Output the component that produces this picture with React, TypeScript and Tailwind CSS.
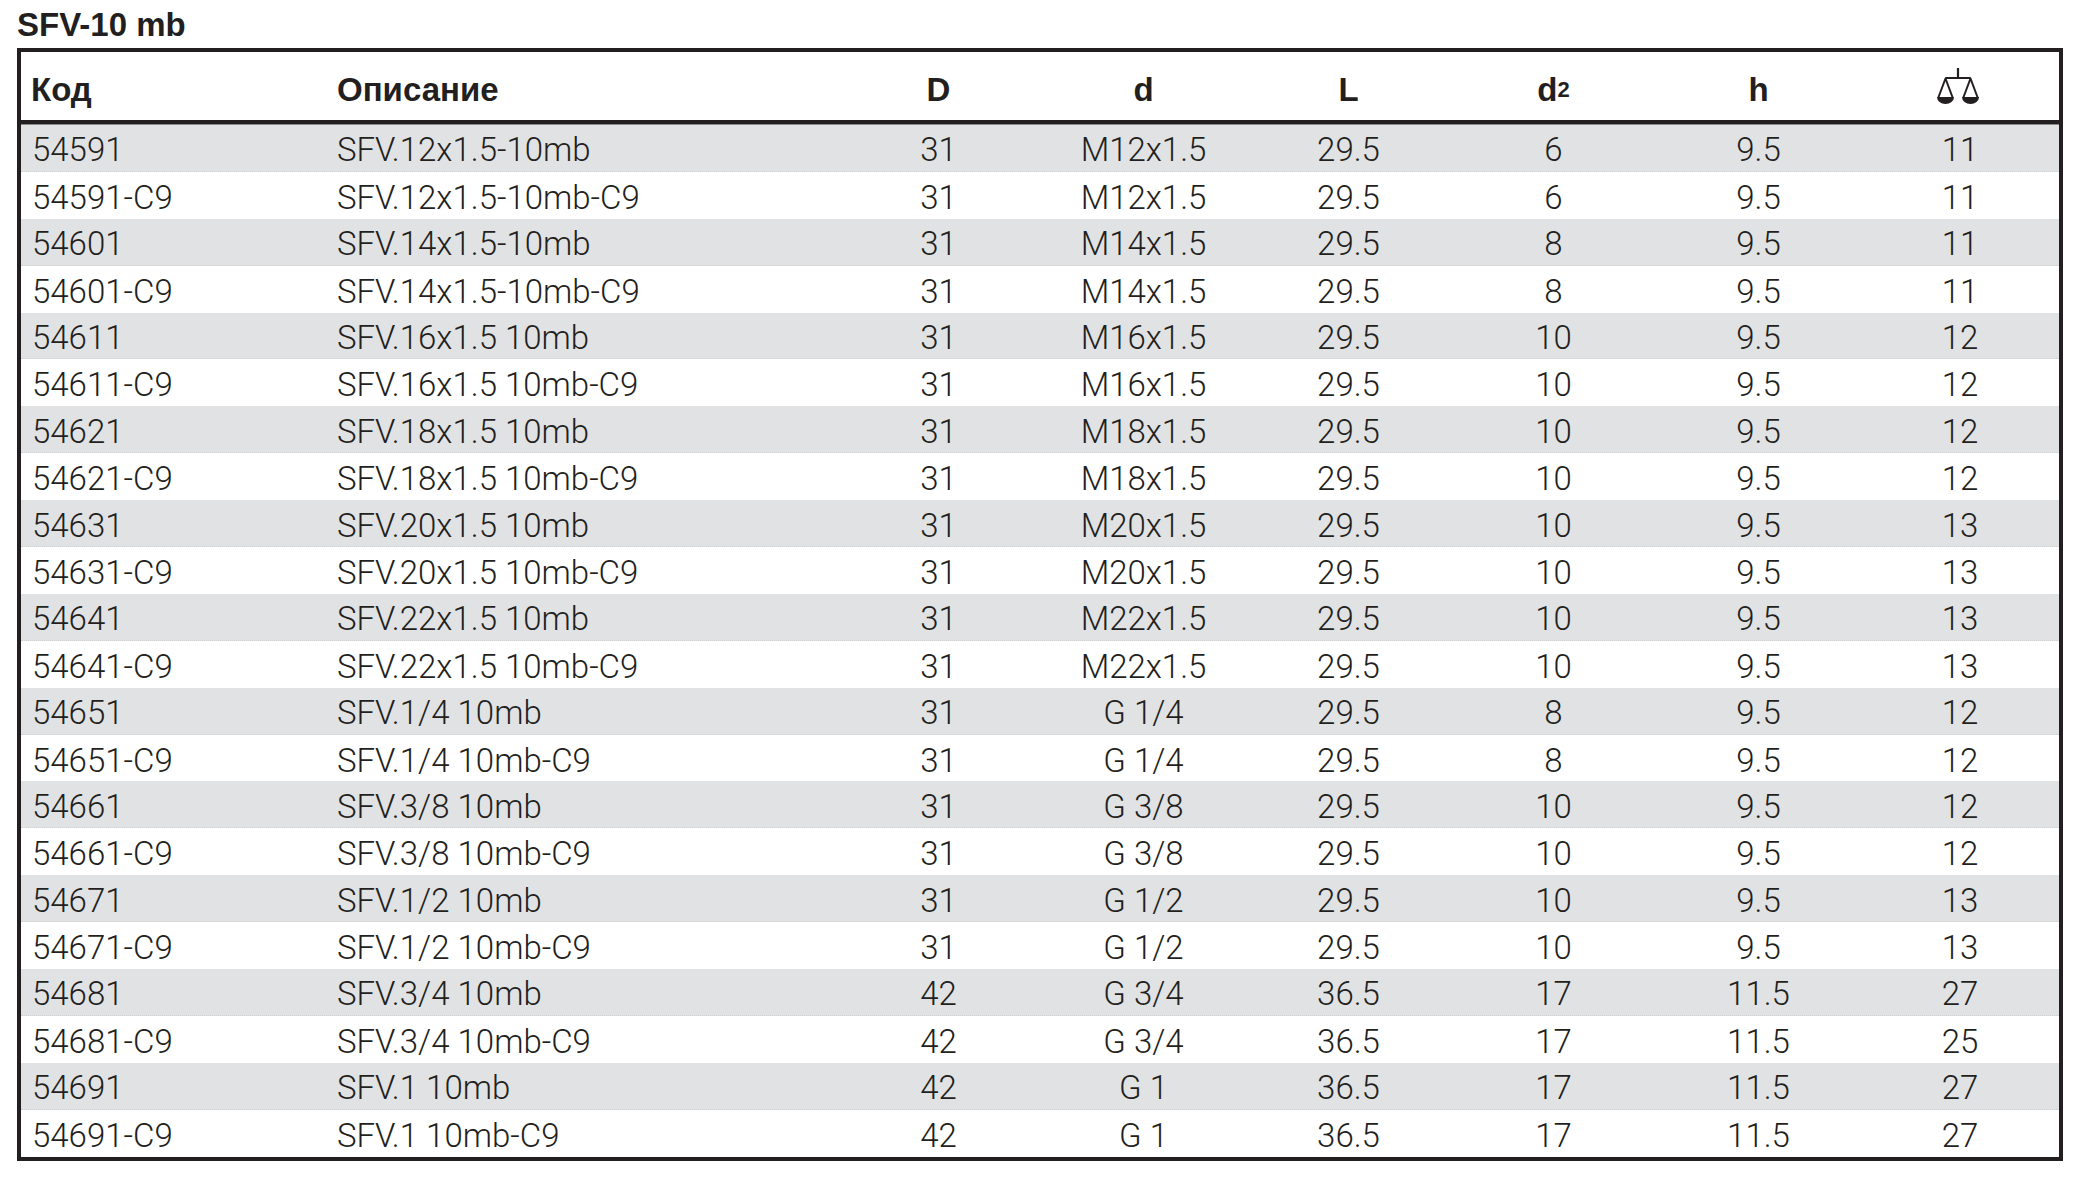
import React from "react";

type Row = [string, string, string, string, string, string, string, string];

const rows: Row[] = [
  ["54591", "SFV.12x1.5-10mb", "31", "M12x1.5", "29.5", "6", "9.5", "11"],
  ["54591-C9", "SFV.12x1.5-10mb-C9", "31", "M12x1.5", "29.5", "6", "9.5", "11"],
  ["54601", "SFV.14x1.5-10mb", "31", "M14x1.5", "29.5", "8", "9.5", "11"],
  ["54601-C9", "SFV.14x1.5-10mb-C9", "31", "M14x1.5", "29.5", "8", "9.5", "11"],
  ["54611", "SFV.16x1.5 10mb", "31", "M16x1.5", "29.5", "10", "9.5", "12"],
  ["54611-C9", "SFV.16x1.5 10mb-C9", "31", "M16x1.5", "29.5", "10", "9.5", "12"],
  ["54621", "SFV.18x1.5 10mb", "31", "M18x1.5", "29.5", "10", "9.5", "12"],
  ["54621-C9", "SFV.18x1.5 10mb-C9", "31", "M18x1.5", "29.5", "10", "9.5", "12"],
  ["54631", "SFV.20x1.5 10mb", "31", "M20x1.5", "29.5", "10", "9.5", "13"],
  ["54631-C9", "SFV.20x1.5 10mb-C9", "31", "M20x1.5", "29.5", "10", "9.5", "13"],
  ["54641", "SFV.22x1.5 10mb", "31", "M22x1.5", "29.5", "10", "9.5", "13"],
  ["54641-C9", "SFV.22x1.5 10mb-C9", "31", "M22x1.5", "29.5", "10", "9.5", "13"],
  ["54651", "SFV.1/4 10mb", "31", "G 1/4", "29.5", "8", "9.5", "12"],
  ["54651-C9", "SFV.1/4 10mb-C9", "31", "G 1/4", "29.5", "8", "9.5", "12"],
  ["54661", "SFV.3/8 10mb", "31", "G 3/8", "29.5", "10", "9.5", "12"],
  ["54661-C9", "SFV.3/8 10mb-C9", "31", "G 3/8", "29.5", "10", "9.5", "12"],
  ["54671", "SFV.1/2 10mb", "31", "G 1/2", "29.5", "10", "9.5", "13"],
  ["54671-C9", "SFV.1/2 10mb-C9", "31", "G 1/2", "29.5", "10", "9.5", "13"],
  ["54681", "SFV.3/4 10mb", "42", "G 3/4", "36.5", "17", "11.5", "27"],
  ["54681-C9", "SFV.3/4 10mb-C9", "42", "G 3/4", "36.5", "17", "11.5", "25"],
  ["54691", "SFV.1 10mb", "42", "G 1", "36.5", "17", "11.5", "27"],
  ["54691-C9", "SFV.1 10mb-C9", "42", "G 1", "36.5", "17", "11.5", "27"],
];

function Scales() {
  return (
    <svg width="42" height="37" viewBox="0 0 42 37" fill="none">
      <line x1="21" y1="0" x2="21" y2="10.5" stroke="#231f20" strokeWidth="2.2" />
      <line x1="8.5" y1="10" x2="33.5" y2="10" stroke="#231f20" strokeWidth="2" />
      <polyline points="1.2,30 8.5,10.5 15.8,30" stroke="#231f20" strokeWidth="2" strokeLinejoin="round" />
      <polyline points="26.2,30 33.5,10.5 40.8,30" stroke="#231f20" strokeWidth="2" strokeLinejoin="round" />
      <path d="M0 29 H17 A8.5 7 0 0 1 0 29 Z" fill="#231f20" />
      <path d="M25 29 H42 A8.5 7 0 0 1 25 29 Z" fill="#231f20" />
    </svg>
  );
}

const gridCols = "grid grid-cols-[304px_511px_205px_205px_205px_205px_205px_1fr]";

export default function App() {
  return (
    <div className="w-[2082px] h-[1182px] bg-white text-[#231f20] pt-[9px] pl-[17px]">
      <div
        className="text-[33px] leading-[32px] font-bold"
        style={{ fontFamily: '"Liberation Sans", Arial, sans-serif' }}
      >
        SFV-10 mb
      </div>
      <div className="mt-[7px] w-[2046px] border-4 border-[#231f20]">
        <div
          className={`${gridCols} h-[68px] text-[33px] leading-[32px] font-bold`}
          style={{ fontFamily: '"Liberation Sans", Arial, sans-serif' }}
        >
          <div className="flex items-center pl-[10px] pt-[7px]">Код</div>
          <div className="flex items-center pl-[12px] pt-[7px]">Описание</div>
          <div className="flex items-center justify-center pt-[7px]">D</div>
          <div className="flex items-center justify-center pt-[7px]">d</div>
          <div className="flex items-center justify-center pt-[7px]">L</div>
          <div className="flex items-center justify-center pt-[7px]">
            <span>d</span>
            <span className="text-[22px]">2</span>
          </div>
          <div className="flex items-center justify-center pt-[7px]">h</div>
          <div className="flex items-center justify-center pr-[4px]">
            <Scales />
          </div>
        </div>
        <div className="h-[4px] bg-[#231f20]" />
        <div className="h-px bg-[#8a8a8a]" />
        <div
          className="font-light text-[33px] leading-[33px]"
          style={{ fontFamily: 'Roboto, "Liberation Sans", sans-serif' }}
        >
          {rows.map((r, i) => (
            <div
              key={r[0]}
              className={`${gridCols} h-[46.9px] ${
                i % 2 === 0
                  ? "bg-[#e1e2e4] border-b border-dotted border-[#cfd0d2]"
                  : "bg-white"
              }`}
            >
              <div className="flex items-center pl-[11px] pt-[4px]">{r[0]}</div>
              <div className="flex items-center pl-[12px] pt-[4px]">{r[1]}</div>
              {r.slice(2).map((v, j) => (
                <div key={j} className="flex items-center justify-center pt-[4px]">
                  {v}
                </div>
              ))}
            </div>
          ))}
        </div>
      </div>
    </div>
  );
}
